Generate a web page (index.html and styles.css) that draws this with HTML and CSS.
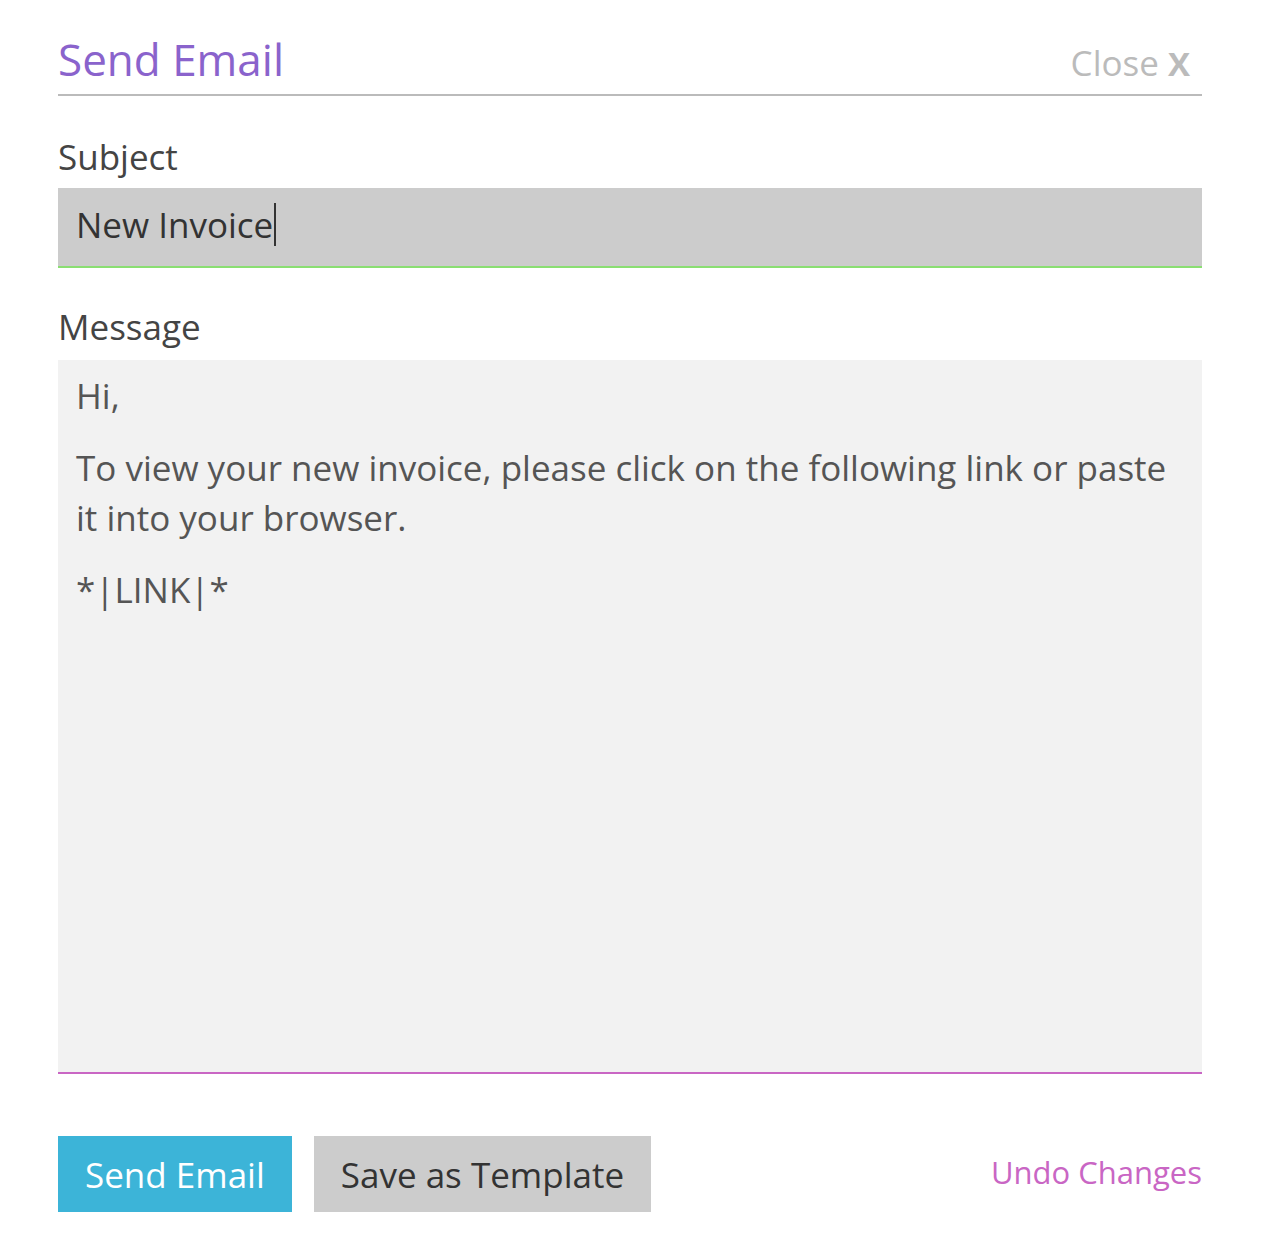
FILE: index.html
```html
<!DOCTYPE html>
<html lang="en">
<head>
    <meta charset="UTF-8">
    <meta name="viewport" content="width=device-width, initial-scale=1.0">
    <title>Send Email</title>
    <link rel="stylesheet" href="styles.css">
</head>
<body>
    <div class="dialog">
        <div class="dialog-header">
            <h1 class="dialog-title">Send Email</h1>
            <a class="close-link" href="#">Close <b>X</b></a>
        </div>

        <label class="field-label subject-label">Subject</label>
        <div class="subject-field">New Invoice<span class="caret"></span></div>

        <label class="field-label message-label">Message</label>
        <div class="message-field">
            <p>Hi,</p>
            <p>To view your new invoice, please click on the following link or paste it into your browser.</p>
            <p>*|LINK|*</p>
        </div>

        <div class="actions">
            <button class="btn btn-send">Send Email</button>
            <button class="btn btn-template">Save as Template</button>
            <a class="undo-link" href="#">Undo Changes</a>
        </div>
    </div>
</body>
</html>
```

FILE: styles.css
```css
body {
    margin: 0;
    padding: 0;
    background: #fff;
    font-family: "Open Sans", "Noto Sans", Arial, sans-serif;
    color: #444;
}
.dialog {
    padding: 29px 60px 48px 58px;
}
.dialog-header {
    display: flex;
    justify-content: space-between;
    align-items: baseline;
    padding-bottom: 5px;
    border-bottom: 2px solid #bbb;
}
.dialog-title {
    margin: 0;
    font-size: 44px;
    line-height: 60px;
    font-weight: normal;
    color: #8a63cc;
}
.close-link {
    font-size: 35px;
    color: #bbb;
    text-decoration: none;
    margin-right: 12px;
}
.close-link b {
    font-weight: bold;
    font-size: 33px;
}
.field-label {
    display: block;
    font-size: 35px;
    line-height: 51px;
    color: #444;
}
.subject-label {
    margin: 35px 0 6px;
}
.message-label {
    margin: 33px 0 8px;
}
.subject-field {
    height: 74px;
    line-height: 74px;
    padding: 0 18px 4px;
    background: #ccc;
    border-bottom: 2px solid #8ade72;
    font-size: 35px;
    color: #333;
}
.caret {
    display: inline-block;
    width: 2px;
    height: 43px;
    background: #333;
    vertical-align: -8px;
    margin-left: 1px;
}
.message-field {
    height: 701px;
    padding: 11px 18px 0 18px;
    background: #f2f2f2;
    border-bottom: 2px solid #c966c4;
    font-size: 35px;
    line-height: 50px;
    color: #555;
}
.message-field p {
    margin: 0 0 22px 0;
}
.actions {
    display: flex;
    align-items: center;
    gap: 22px;
    margin-top: 62px;
}
.btn {
    height: 76px;
    padding: 0 27px;
    border: none;
    border-radius: 0;
    font-family: inherit;
    font-size: 35px;
    cursor: pointer;
}
.btn-send {
    background: #3cb4d8;
    color: #fff;
}
.btn-template {
    background: #ccc;
    color: #333;
}
.undo-link {
    margin-left: auto;
    margin-bottom: 4px;
    font-size: 31px;
    color: #c966c4;
    text-decoration: none;
}
```
